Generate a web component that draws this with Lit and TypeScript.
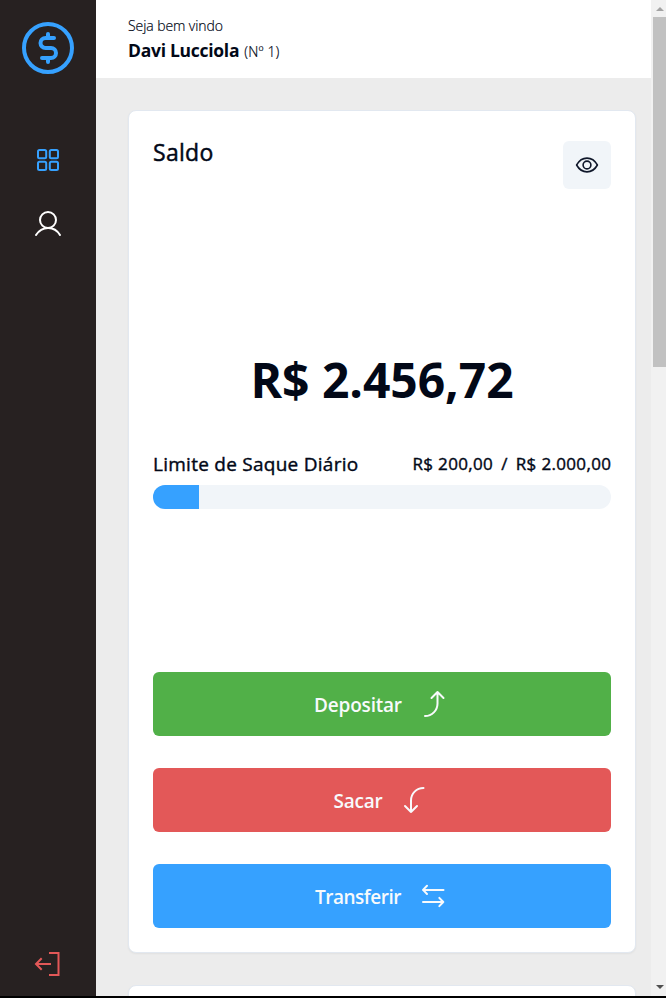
import { LitElement, html, css, svg } from "lit";
import { customElement, property } from "lit/decorators.js";

const shapes: Record<string, { w: number; h: number; stroke: number; body: unknown }> = {
  logo: { w: 52, h: 52, stroke: 4, body: svg`<circle cx="26" cy="26" r="24"/><path stroke-linecap="round" d="M26 12V16M26 36V40M32 16H23.5A5 5 0 0 0 23.5 26H29A5 5 0 0 1 29 36H20"/>` },
  grid: { w: 24, h: 24, stroke: 2, body: svg`<rect x="2" y="2" width="8.2" height="8.2" rx="1.5"/><rect x="13.8" y="2" width="8.2" height="8.2" rx="1.5"/><rect x="2" y="13.8" width="8.2" height="8.2" rx="1.5"/><rect x="13.8" y="13.8" width="8.2" height="8.2" rx="1.5"/>` },
  user: { w: 32, h: 32, stroke: 2, body: svg`<circle cx="16" cy="12" r="8"/><path stroke-linecap="round" d="M4 27Q8.4 20.2 16 20T28 27"/>` },
  exit: { w: 32, h: 32, stroke: 2, body: svg`<path d="M17 5H26.5V27H17M19 16H4M9.7 10.3L4 16L9.7 21.7"/>` },
  eye: { w: 24, h: 24, stroke: 1.6, body: svg`<path stroke-linejoin="round" d="M1.6 12C4.1 7.5 7.7 5.1 12 5.1S19.9 7.5 22.4 12C19.9 16.5 16.3 18.9 12 18.9S4.1 16.5 1.6 12Z"/><circle cx="12" cy="12" r="3.9"/>` },
  up: { w: 32, h: 32, stroke: 2, body: svg`<path stroke-linecap="round" stroke-linejoin="round" d="M7 28C14 28 19.5 22.5 19.5 15.5V4M13.5 10L19.5 4L25.5 10"/>` },
  down: { w: 32, h: 32, stroke: 2, body: svg`<path stroke-linecap="round" stroke-linejoin="round" d="M24.5 4C17.5 4 12 9.5 12 16.5V28M6 22L12 28L18 22"/>` },
  swap: { w: 32, h: 32, stroke: 2, body: svg`<path stroke-linecap="round" stroke-linejoin="round" d="M26.5 9.9H6M10 5.8L6 9.9L10 14M6 22H26.3M22.3 17.9L26.3 22L22.3 26.1"/>` },
};

@customElement("bank-icon")
export class BankIcon extends LitElement {
  static styles = css`
    :host { display: block; flex: none; }
    svg { display: block; fill: none; stroke: currentColor; }
  `;
  @property() name = "logo";
  render() {
    const s = shapes[this.name];
    return html`<svg width=${s.w} height=${s.h} viewBox="0 0 ${s.w} ${s.h}" stroke-width=${s.stroke}>${s.body}</svg>`;
  }
}

@customElement("app-root")
export class AppRoot extends LitElement {
  static styles = css`
    :host {
      display: grid; grid-template-rows: 996px 2px; width: 666px; height: 998px; overflow: hidden;
      background: #000; color: #020817; font-family: "Open Sans", "Noto Sans", sans-serif;
    }
    * { box-sizing: border-box; }
    .frame { display: grid; grid-template-columns: 96px 555px 15px; min-height: 0; }
    .side { background: #272121; display: flex; flex-direction: column; align-items: center; padding: 22px 0 16px; color: #fff; }
    .blue { color: #36a1ff; }
    .nav { margin-top: 74px; display: flex; flex-direction: column; align-items: center; gap: 36px; }
    .exit { margin-top: auto; color: #e35858; }
    .page { background: #ececec; overflow: hidden; min-height: 0; }
    .top { height: 78px; background: #fff; padding: 16px 32px; white-space: nowrap; }
    .hello { font-size: 14px; line-height: 20px; font-weight: 300; letter-spacing: -.08px; -webkit-text-stroke: .2px currentColor; }
    .who { display: flex; align-items: baseline; gap: 5px; line-height: 28px; }
    .name { font-size: 17.5px; font-weight: 700; letter-spacing: -.28px; }
    .num { font-size: 14px; font-weight: 300; letter-spacing: .15px; -webkit-text-stroke: .2px currentColor; }
    .content { padding: 32px 15px 0 32px; display: flex; flex-direction: column; gap: 32px; }
    .card { height: 843px; background: #fff; border: 1px solid #e2e8f0; border-radius: 8px; padding: 30px 24px 24px; box-shadow: 0 1px 2px #0000000d; display: flex; flex-direction: column; flex: none; }
    .head { display: flex; justify-content: space-between; }
    .title { font-size: 23px; line-height: 22px; letter-spacing: .3px; -webkit-text-stroke: .45px currentColor; }
    .eye { width: 48px; height: 48px; border-radius: 6px; background: #f1f5f9; color: #0f172a; display: grid; place-items: center; }
    .middle { flex: 1; }
    .amount { text-align: center; font-size: 48px; line-height: 48px; font-weight: 700; margin-top: 167px; letter-spacing: -.05px; }
    .limit { display: flex; justify-content: space-between; align-items: center; margin-top: 45px; height: 28px; white-space: nowrap; -webkit-text-stroke: .4px currentColor; }
    .label { font-size: 19px; letter-spacing: .26px; padding-top: 2px; }
    .values { font-size: 17px; display: flex; gap: 8px; letter-spacing: .34px; margin-right: -.3px; }
    .track { height: 24px; margin-top: 8px; border-radius: 12px; background: #f1f5f9; overflow: hidden; }
    .bar { height: 100%; background: #36a1ff; }
    .actions { display: flex; flex-direction: column; gap: 32px; }
    .btn { height: 64px; border: 0; border-radius: 6px; display: flex; align-items: center; justify-content: center; gap: 16px; color: #f8fafc; font: 600 19px "Open Sans", sans-serif; padding: 0; }
    .btn span { padding-top: 2px; letter-spacing: -.2px; }
    .btn.azure span { letter-spacing: -.5px; }
    .green { background: #51b048; }
    .red { background: #e35858; }
    .azure { background: #36a1ff; }
    .scroll { background: #f1f1f1; display: flex; flex-direction: column; align-items: center; padding: 7px 0 7px 2px; }
    .arrow { border: 4px solid transparent; border-top: 0; border-bottom-color: #a3a3a3; }
    .arrow.low { border-bottom: 0; border-top: 4px solid #505050; margin-top: auto; }
    .thumb { width: 13px; height: 350px; margin-top: 6px; background: #c1c1c1; }
  `;

  private spent = 200;
  private limit = 2000;

  render() {
    return html`
      <div class="frame">
        <aside class="side">
          <bank-icon class="blue" name="logo"></bank-icon>
          <nav class="nav">
            <bank-icon class="blue" name="grid"></bank-icon>
            <bank-icon name="user"></bank-icon>
          </nav>
          <bank-icon class="exit" name="exit"></bank-icon>
        </aside>
        <main class="page">
          <header class="top">
            <div class="hello">Seja bem vindo</div>
            <div class="who"><span class="name">Davi Lucciola</span><span class="num">(Nº 1)</span></div>
          </header>
          <div class="content">
            <section class="card">
              <div class="head"><div class="title">Saldo</div><div class="eye"><bank-icon name="eye"></bank-icon></div></div>
              <div class="middle">
                <div class="amount">R$ 2.456,72</div>
                <div class="limit">
                  <span class="label">Limite de Saque Diário</span>
                  <span class="values"><span>R$ 200,00</span><span>/</span><span>R$ 2.000,00</span></span>
                </div>
                <div class="track"><div class="bar" style="width:${(this.spent / this.limit) * 100}%"></div></div>
              </div>
              <div class="actions">
                <button class="btn green"><span>Depositar</span><bank-icon name="up"></bank-icon></button>
                <button class="btn red"><span>Sacar</span><bank-icon name="down"></bank-icon></button>
                <button class="btn azure"><span>Transferir</span><bank-icon name="swap"></bank-icon></button>
              </div>
            </section>
            <section class="card"></section>
          </div>
        </main>
        <div class="scroll"><i class="arrow"></i><div class="thumb"></div><i class="arrow low"></i></div>
      </div>
    `;
  }
}
